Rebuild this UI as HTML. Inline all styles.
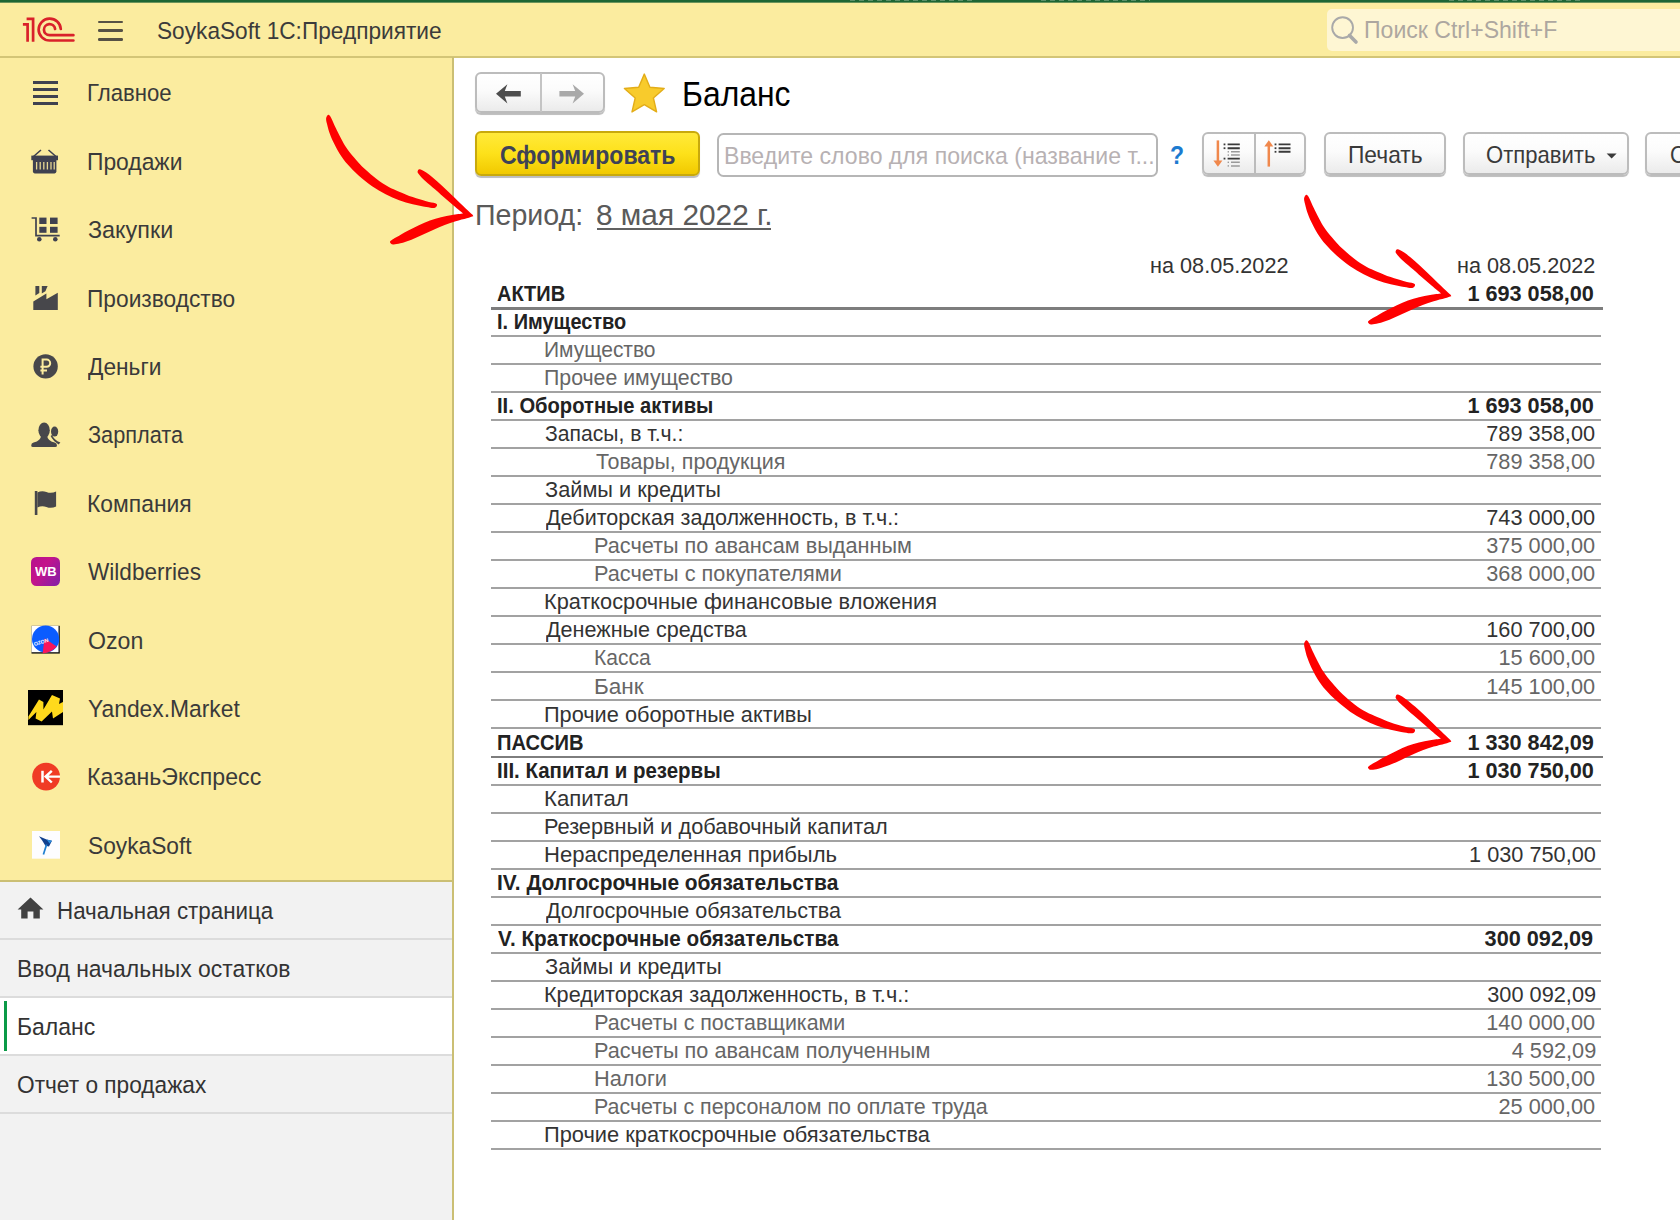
<!DOCTYPE html>
<html lang="ru"><head><meta charset="utf-8"><title>Баланс</title>
<style>
html,body{margin:0;padding:0}
body{width:1680px;height:1220px;overflow:hidden;position:relative;background:#fff;font-family:"Liberation Sans",sans-serif}
.abs,.t,svg{position:absolute}
.t{white-space:nowrap;line-height:1;transform-origin:0 50%}
.btn{position:absolute;box-sizing:border-box;border:2px solid #bcbcbc;border-radius:6px;background:linear-gradient(#ffffff 0%,#fbfbfb 45%,#ebebeb 100%);box-shadow:0 1.1px .7px rgba(0,0,0,.26)}
.ln{position:absolute;left:491px;width:1110px;height:2px;background:#a2a2a2}
.lk{position:absolute;left:491px;width:1111.6px;height:2.7px;background:#7d7d7d}
.sep{position:absolute;left:0;width:452px;height:2.3px;background:#dcdcdc}
</style></head><body>

<div class="abs" style="left:0;top:0;width:1680px;height:56px;background:#fbec9f"></div>
<div class="abs" style="left:0;top:0;width:1680px;height:3px;background:linear-gradient(#1d6634 0,#1d6634 2px,#b9c182 3px)"></div>
<div class="abs" style="left:0;top:55.6px;width:1680px;height:2.4px;background:#d3c577"></div>
<div class="abs" style="left:850px;top:0;width:125px;height:1.2px;background:repeating-linear-gradient(90deg,rgba(235,240,225,.3) 0 5px,rgba(235,240,225,0) 5px 9px)"></div>
<div class="abs" style="left:1041px;top:0;width:109px;height:1.2px;background:repeating-linear-gradient(90deg,rgba(235,240,225,.3) 0 5px,rgba(235,240,225,0) 5px 9px)"></div>
<div class="abs" style="left:1449px;top:0;width:131px;height:1.2px;background:repeating-linear-gradient(90deg,rgba(235,240,225,.3) 0 5px,rgba(235,240,225,0) 5px 9px)"></div>
<svg style="left:20px;top:14px" width="58" height="32" viewBox="20 14 58 32">
<g fill="none" stroke="#d9212a" stroke-width="2.7">
<path d="M27.6 41.7V24.4H22.9"/>
<path d="M33.1 41.7V18.9H26.6"/>
<path d="M60.8 29A11.1 10.9 0 1 0 49.7 40.5H73.4" stroke-linecap="round"/>
<path d="M55.1 29A5.6 5.5 0 1 0 49.5 35.2H73.4" stroke-linecap="round"/>
</g></svg>
<div class="abs" style="left:98.2px;top:20.55px;width:24.6px;height:2.5px;border-radius:1.2px;background:#565145"></div>
<div class="abs" style="left:98.2px;top:29.45px;width:24.6px;height:2.5px;border-radius:1.2px;background:#565145"></div>
<div class="abs" style="left:98.2px;top:38.15px;width:24.6px;height:2.5px;border-radius:1.2px;background:#565145"></div>
<span class="t" style="top:19.03px;font-size:24.3px;color:#3b3b3b;left:157.37px;transform:scaleX(0.9330);">SoykaSoft 1С:Предприятие</span>
<div class="abs" style="left:1327px;top:9px;width:400px;height:42px;border-radius:5px;background:#fef6d3"></div>
<svg style="left:1328px;top:14px" width="32" height="32" viewBox="1328 14 32 32"><circle cx="1342.6" cy="27.6" r="10.4" fill="none" stroke="#a9a9a9" stroke-width="1.9"/><path d="M1349.6 35.4L1356 42" stroke="#a9a9a9" stroke-width="3.6" stroke-linecap="round"/></svg>
<span class="t" style="top:18.45px;font-size:23.8px;color:#ada7a0;left:1363.96px;transform:scaleX(0.9690);">Поиск Ctrl+Shift+F</span>
<div class="abs" style="left:0;top:57.8px;width:452px;height:822px;background:#fbec9f"></div>
<div class="abs" style="left:0;top:879.6px;width:452px;height:2.2px;background:#cbbf74"></div>
<div class="abs" style="left:0;top:881.8px;width:452px;height:340px;background:#f2f2f2"></div>
<div class="abs" style="left:452px;top:57px;width:2.4px;height:1165px;background:#cbbf74"></div>
<span class="t" style="top:81.36px;font-size:24.5px;color:#3a3a3a;left:87.19px;transform:scaleX(0.9044);">Главное</span>
<span class="t" style="top:149.76px;font-size:24.5px;color:#3a3a3a;left:87.14px;transform:scaleX(0.9323);">Продажи</span>
<span class="t" style="top:218.16px;font-size:24.5px;color:#3a3a3a;left:87.75px;transform:scaleX(0.9540);">Закупки</span>
<span class="t" style="top:286.56px;font-size:24.5px;color:#3a3a3a;left:87.14px;transform:scaleX(0.9280);">Производство</span>
<span class="t" style="top:354.96px;font-size:24.5px;color:#3a3a3a;left:88.40px;transform:scaleX(0.9269);">Деньги</span>
<span class="t" style="top:423.36px;font-size:24.5px;color:#3a3a3a;left:87.81px;transform:scaleX(0.8869);">Зарплата</span>
<span class="t" style="top:491.76px;font-size:24.5px;color:#3a3a3a;left:87.13px;transform:scaleX(0.9339);">Компания</span>
<span class="t" style="top:560.16px;font-size:24.5px;color:#3a3a3a;left:88.40px;transform:scaleX(0.9221);">Wildberries</span>
<span class="t" style="top:628.56px;font-size:24.5px;color:#3a3a3a;left:87.76px;transform:scaleX(0.9446);">Ozon</span>
<span class="t" style="top:696.96px;font-size:24.5px;color:#3a3a3a;left:87.77px;transform:scaleX(0.9315);">Yandex.Market</span>
<span class="t" style="top:765.36px;font-size:24.5px;color:#3a3a3a;left:87.11px;transform:scaleX(0.9434);">КазаньЭкспресс</span>
<span class="t" style="top:833.76px;font-size:24.5px;color:#3a3a3a;left:87.77px;transform:scaleX(0.9279);">SoykaSoft</span>
<div class="abs" style="left:33px;top:81px;width:25px;height:3px;background:#3f4150"></div>
<div class="abs" style="left:33px;top:88px;width:25px;height:3px;background:#3f4150"></div>
<div class="abs" style="left:33px;top:95px;width:25px;height:3px;background:#3f4150"></div>
<div class="abs" style="left:33px;top:102px;width:25px;height:3px;background:#3f4150"></div>
<svg style="left:29px;top:146px" width="32" height="30" viewBox="29 146 32 30">
<path d="M33.5 156.5L41 150M56 156.5L48.5 150" stroke="#3f4150" stroke-width="1.6" fill="none"/>
<rect x="31.3" y="155.6" width="26.7" height="4.6" fill="#3f4150"/>
<path d="M32.9 160H56.4V171.6Q56.4 173.4 54.6 173.4H34.7Q32.9 173.4 32.9 171.6Z" fill="#3f4150"/>
<g stroke="#e6d692" stroke-width="1.3"><path d="M36.6 162V169.6M40.2 162V169.6M43.8 162V169.6M47.4 162V169.6M51 162V169.6M54.2 162V169.6"/></g>
</svg>
<svg style="left:29px;top:214px" width="34" height="30" viewBox="29 214 34 30">
<path d="M31.6 218H36V235.6H59.7" stroke="#3f4150" stroke-width="1.7" fill="none"/>
<rect x="39.3" y="217.6" width="7.2" height="6.4" fill="#3f4150"/><rect x="50" y="217.6" width="7.6" height="6.4" fill="#3f4150"/>
<rect x="39.3" y="226.8" width="7.2" height="6" fill="#3f4150"/><rect x="50" y="226.8" width="7.6" height="6" fill="#3f4150"/>
<circle cx="39.3" cy="239.3" r="2.3" fill="#3f4150"/><circle cx="55.3" cy="239.3" r="2.3" fill="#3f4150"/>
</svg>
<svg style="left:30px;top:283px" width="32" height="30" viewBox="30 283 32 30">
<path d="M33.3 310V301.4L46.4 293.6V299.3L57.8 292.8V310Z" fill="#47474b"/>
<path d="M35.4 286H39.3V293L35.4 295.6Z" fill="#47474b"/><path d="M41.8 286H47.6L45.4 291.2L41.8 293.6Z" fill="#47474b"/>
</svg>
<svg style="left:32px;top:353px" width="28" height="28" viewBox="32 353 28 28">
<circle cx="45.6" cy="366.4" r="12.2" fill="#47474b"/>
<path d="M42.6 374.4V359.6H46.6A3.5 3.5 0 0 1 46.6 366.8H40.4M40.4 370.4H47" stroke="#fbec9f" stroke-width="2" fill="none"/>
</svg>
<svg style="left:29px;top:420px" width="34" height="30" viewBox="29 420 34 30">
<ellipse cx="54.6" cy="431.6" rx="3.6" ry="5" fill="#47474b"/>
<path d="M52 435Q54 440 60.4 442.6L58.6 444.4Q53 441 50.6 436Z" fill="#47474b"/>
<ellipse cx="44.1" cy="430.2" rx="5.7" ry="7.8" fill="#47474b"/>
<path d="M41 435.5Q41 440.6 33.6 442.6Q31.2 443.4 31.2 445.4Q31.2 447 33 447H55.2Q57 447 57 445.4Q57 443.4 54.6 442.6Q47.2 440.6 47.2 435.5Z" fill="#47474b"/>
</svg>
<svg style="left:32px;top:488px" width="28" height="30" viewBox="32 488 28 30">
<rect x="34.8" y="491" width="2.6" height="24" fill="#47474b"/>
<path d="M37.4 492.4Q42 490.2 46.4 492Q51.4 494 56.1 491.4V506.4Q51.4 509 46.4 507Q42 505.2 37.4 507.4Z" fill="#47474b"/>
</svg>
<div class="abs" style="left:31.2px;top:557.2px;width:29px;height:28.5px;border-radius:5.5px;background:linear-gradient(125deg,#b4128f 0%,#c4148a 40%,#a01a9c 70%,#8220a8 100%)"></div>
<span class="t" style="top:565.03px;font-size:13.2px;color:#fff;font-weight:700;left:34.90px;transform:scaleX(0.9818);">WB</span>
<svg style="left:30px;top:624px" width="32" height="32" viewBox="30 624 32 32">
<rect x="31.5" y="625.8" width="28.3" height="27.8" fill="#111"/>
<rect x="31.5" y="625.8" width="27" height="26.4" fill="#fff"/>
<circle cx="45.6" cy="639" r="13.6" fill="#0a5cff"/>
<path d="M44.6 638.2L56.6 646.4Q51.4 652.8 42.6 653.4Z" fill="#f9155a"/>
<text x="34.4" y="646" font-family="Liberation Sans,sans-serif" font-size="5.2" font-weight="700" fill="#fff" transform="rotate(-17 34.4 646)">OZON</text>
</svg>
<svg style="left:28px;top:690.4px" width="35.2" height="35.2" viewBox="0 0 35.2 35.2">
<rect width="35.2" height="35.2" fill="#000"/>
<path d="M0.4 26.6L11 9.6L15.4 12V19.4L24 5L32 8.6L31 14L35.2 12V22L25 28.6L24 21.4L13.6 31.6L7.6 28.4L8.4 22L0.4 30Z" fill="#ffd91c"/>
</svg>
<svg style="left:31px;top:761px" width="31" height="31" viewBox="31 761 31 31">
<circle cx="46.1" cy="776.6" r="13.9" fill="#f03b25"/>
<path d="M42.5 770.8V782.5" stroke="#fff" stroke-width="2.5" fill="none"/>
<path d="M51.8 770.8L45.6 776.6L51.8 782.5M45.6 776.6H60" stroke="#fff" stroke-width="2.4" fill="none"/>
</svg>
<svg style="left:31.5px;top:831px" width="28.1" height="27.7" viewBox="0 0 28.1 27.7">
<rect width="28.1" height="27.7" fill="#fdfdff"/>
<path d="M7 5.2L14.6 8.6L20 9.8L17 15.4L13.4 14.8L10.2 9.6Z" fill="#10408f"/>
<path d="M14.6 13.4L11.4 23.6" stroke="#1e7fd0" stroke-width="1.7" fill="none"/>
<path d="M14.6 8.6L20 9.8L17.6 12.4Z" fill="#2a8fe0"/>
</svg>
<div class="abs" style="left:0;top:998px;width:452px;height:55.6px;background:#fff"></div>
<div class="sep" style="top:937.5px"></div>
<div class="sep" style="top:995.5px"></div>
<div class="sep" style="top:1053.5px"></div>
<div class="sep" style="top:1111.5px"></div>
<div class="abs" style="left:3.6px;top:1000.6px;width:3.6px;height:50px;background:#0b9a47"></div>
<svg style="left:17px;top:897px" width="28" height="24" viewBox="17 897 28 24"><path d="M30.5 897.5L17.6 909.4H21.2V918.5H27.6V911.6H33.4V918.5H39.8V909.4H43.4Z" fill="#424242"/></svg>
<span class="t" style="top:898.73px;font-size:24.3px;color:#333;left:57.06px;transform:scaleX(0.9197);">Начальная страница</span>
<span class="t" style="top:956.73px;font-size:24.3px;color:#333;left:16.51px;transform:scaleX(0.9436);">Ввод начальных остатков</span>
<span class="t" style="top:1014.73px;font-size:24.3px;color:#333;left:16.51px;transform:scaleX(0.9462);">Баланс</span>
<span class="t" style="top:1072.73px;font-size:24.3px;color:#333;left:17.17px;transform:scaleX(0.9332);">Отчет о продажах</span>
<div class="btn" style="left:475.4px;top:71.8px;width:129.2px;height:40.8px"></div>
<div class="abs" style="left:540.2px;top:72.8px;width:1.9px;height:39px;background:#c4c4c4"></div>
<svg style="left:490px;top:80px" width="100" height="28" viewBox="490 80 100 28">
<path d="M496 93.7L507.4 84.2L504.8 91H520.8V96.6H504.8L507.4 103.4Z" fill="#4d4d4d"/>
<path d="M584 93.7L572.6 84.2L575.2 91H559.4V96.6H575.2L572.6 103.4Z" fill="#a9a9a9"/>
</svg>
<svg style="left:620px;top:70px" width="50" height="48" viewBox="620 70 50 48"><polygon points="644.3,74.1 649.9,87.2 664.2,88.5 653.4,98.0 656.6,111.9 644.3,104.6 632.0,111.9 635.2,98.0 624.4,88.5 638.7,87.2" fill="#f8cb2c" stroke="#e3ad18" stroke-width="1.4" stroke-linejoin="round"/></svg>
<span class="t" style="top:76.12px;font-size:35.3px;color:#000;left:681.89px;transform:scaleX(0.9026);">Баланс</span>
<div class="btn" style="left:475.4px;top:131.4px;width:224.2px;height:44.4px;border-color:#c8a90c;background:linear-gradient(#ffe93a 0%,#fde11a 50%,#f1c900 100%)"></div>
<span class="t" style="top:142.97px;font-size:25.2px;color:#3e4256;font-weight:700;left:499.89px;transform:scaleX(0.9147);">Сформировать</span>
<div class="abs" style="left:717.1px;top:132.9px;width:441.4px;height:44.2px;box-sizing:border-box;border:2px solid #b6b6b6;border-radius:6.5px;background:#fff"></div>
<span class="t" style="top:143.65px;font-size:23.8px;color:#b7b1b3;left:723.66px;transform:scaleX(0.9691);">Введите слово для поиска (название т...</span>
<span class="t" style="top:142.81px;font-size:25.5px;color:#1c7bd0;font-weight:700;left:1170.00px;transform:scaleX(0.9000);">?</span>
<div class="btn" style="left:1201.6px;top:131.5px;width:104.4px;height:43.8px"></div>
<div class="abs" style="left:1253.7px;top:132.5px;width:1.9px;height:42px;background:#bcbcbc"></div>
<svg style="left:1208px;top:136px" width="92" height="36" viewBox="1208 136 92 36">
<path d="M1217.9 140.4V162" stroke="#f0884c" stroke-width="2.5"/><path d="M1213.4 160.6H1222.4L1217.9 166.8Z" fill="#f0884c"/>
<path d="M1268.8 166.6V145" stroke="#f0884c" stroke-width="2.5"/><path d="M1264.3 146.4H1273.3L1268.8 140.2Z" fill="#f0884c"/>
<g stroke="#3a3a3a" stroke-width="1.9"><path d="M1227.6 144.4H1239.8M1227.6 148.2H1239.8M1227.6 158.6H1239.8"/><path d="M1278.6 144.4H1290.5M1278.6 148.2H1290.5M1278.6 151.8H1290.5"/></g>
<g fill="#3a3a3a"><rect x="1223.6" y="143.5" width="1.8" height="1.8"/><rect x="1223.6" y="147.3" width="1.8" height="1.8"/><rect x="1223.6" y="157.7" width="1.8" height="1.8"/>
<rect x="1274.6" y="143.5" width="1.8" height="1.8"/><rect x="1274.6" y="147.3" width="1.8" height="1.8"/><rect x="1274.6" y="150.9" width="1.8" height="1.8"/></g>
<g stroke="#9a9a9a" stroke-width="1.5"><path d="M1231 151.8H1239.8M1231 155.1H1239.8M1231 162.3H1239.8M1231 165.9H1239.8"/></g>
<g fill="#9a9a9a"><rect x="1227.6" y="151.1" width="1.4" height="1.4"/><rect x="1227.6" y="154.4" width="1.4" height="1.4"/><rect x="1227.6" y="161.6" width="1.4" height="1.4"/><rect x="1227.6" y="165.2" width="1.4" height="1.4"/></g>
</svg>
<div class="btn" style="left:1324.2px;top:131.5px;width:122.2px;height:43.8px"></div>
<span class="t" style="top:143.76px;font-size:23.2px;color:#3a3a3a;left:1347.64px;transform:scaleX(0.9822);">Печать</span>
<div class="btn" style="left:1462.7px;top:131.5px;width:166.4px;height:43.8px"></div>
<span class="t" style="top:143.76px;font-size:23.2px;color:#3a3a3a;left:1486.35px;transform:scaleX(0.9513);">Отправить</span>
<svg style="left:1604px;top:150px" width="16" height="10" viewBox="1604 150 16 10"><path d="M1606.6 153.6H1616.6L1611.6 158.6Z" fill="#3a3a3a"/></svg>
<div class="btn" style="left:1645.3px;top:131.5px;width:120px;height:43.8px"></div>
<span class="t" style="top:143.76px;font-size:23.2px;color:#3a3a3a;left:1670.00px;transform:scaleX(0.9300);">С</span>
<span class="t" style="top:199.61px;font-size:29.4px;color:#5a5a5a;left:475.35px;transform:scaleX(0.9729);">Период:</span>
<span class="t" style="top:199.61px;font-size:29.4px;color:#5a5a5a;left:596.49px;transform:scaleX(1.0147);">8 мая 2022 г.</span>
<div class="abs" style="left:596.6px;top:228px;width:174px;height:2px;background:#616161"></div>
<span class="t" style="top:255.70px;font-size:21.5px;color:#333;left:1150.29px;transform:scaleX(1.0081);">на 08.05.2022</span>
<span class="t" style="top:255.70px;font-size:21.5px;color:#333;left:1457.29px;transform:scaleX(1.0066);">на 08.05.2022</span>
<span class="t" style="top:284.12px;font-size:21.3px;color:#222;font-weight:700;left:497.36px;transform:scaleX(0.9380);">АКТИВ</span>
<span class="t" style="top:284.03px;font-size:21.4px;color:#222;font-weight:700;right:85.68px;transform-origin:100% 50%;transform:scaleX(1.0130);">1 693 058,00</span>
<div class="lk" style="top:306.95px"></div>
<span class="t" style="top:312.15px;font-size:21.3px;color:#222;font-weight:700;left:497.36px;transform:scaleX(0.9368);">I. Имущество</span>
<div class="ln" style="top:334.94px"></div>
<span class="t" style="top:340.10px;font-size:21.4px;color:#666;left:544.34px;transform:scaleX(0.9802);">Имущество</span>
<div class="ln" style="top:362.97px"></div>
<span class="t" style="top:368.14px;font-size:21.4px;color:#666;left:544.31px;transform:scaleX(0.9947);">Прочее имущество</span>
<div class="ln" style="top:391.01px"></div>
<span class="t" style="top:396.26px;font-size:21.3px;color:#222;font-weight:700;left:497.35px;transform:scaleX(0.9469);">II. Оборотные активы</span>
<span class="t" style="top:396.17px;font-size:21.4px;color:#222;font-weight:700;right:85.68px;transform-origin:100% 50%;transform:scaleX(1.0130);">1 693 058,00</span>
<div class="ln" style="top:419.04px"></div>
<span class="t" style="top:424.21px;font-size:21.4px;color:#333;left:545.01px;transform:scaleX(0.9883);">Запасы, в т.ч.:</span>
<span class="t" style="top:424.21px;font-size:21.4px;color:#333;right:85.04px;transform-origin:100% 50%;transform:scaleX(1.0160);">789 358,00</span>
<div class="ln" style="top:447.08px"></div>
<span class="t" style="top:452.24px;font-size:21.4px;color:#666;left:595.70px;transform:scaleX(1.0037);">Товары, продукция</span>
<span class="t" style="top:452.24px;font-size:21.4px;color:#666;right:85.04px;transform-origin:100% 50%;transform:scaleX(1.0160);">789 358,00</span>
<div class="ln" style="top:475.11px"></div>
<span class="t" style="top:480.28px;font-size:21.4px;color:#333;left:544.98px;transform:scaleX(1.0175);">Займы и кредиты</span>
<div class="ln" style="top:503.15px"></div>
<span class="t" style="top:508.31px;font-size:21.4px;color:#333;left:545.70px;transform:scaleX(1.0069);">Дебиторская задолженность, в т.ч.:</span>
<span class="t" style="top:508.31px;font-size:21.4px;color:#333;right:85.04px;transform-origin:100% 50%;transform:scaleX(1.0160);">743 000,00</span>
<div class="ln" style="top:531.18px"></div>
<span class="t" style="top:536.35px;font-size:21.4px;color:#666;left:594.27px;transform:scaleX(1.0139);">Расчеты по авансам выданным</span>
<span class="t" style="top:536.35px;font-size:21.4px;color:#666;right:85.04px;transform-origin:100% 50%;transform:scaleX(1.0160);">375 000,00</span>
<div class="ln" style="top:559.22px"></div>
<span class="t" style="top:564.38px;font-size:21.4px;color:#666;left:594.27px;transform:scaleX(1.0149);">Расчеты с покупателями</span>
<span class="t" style="top:564.38px;font-size:21.4px;color:#666;right:85.04px;transform-origin:100% 50%;transform:scaleX(1.0160);">368 000,00</span>
<div class="ln" style="top:587.25px"></div>
<span class="t" style="top:592.42px;font-size:21.4px;color:#333;left:544.27px;transform:scaleX(1.0167);">Краткосрочные финансовые вложения</span>
<div class="ln" style="top:615.28px"></div>
<span class="t" style="top:620.45px;font-size:21.4px;color:#333;left:545.70px;transform:scaleX(1.0080);">Денежные средства</span>
<span class="t" style="top:620.45px;font-size:21.4px;color:#333;right:85.04px;transform-origin:100% 50%;transform:scaleX(1.0160);">160 700,00</span>
<div class="ln" style="top:643.32px"></div>
<span class="t" style="top:648.49px;font-size:21.4px;color:#666;left:594.33px;transform:scaleX(0.9839);">Касса</span>
<span class="t" style="top:648.49px;font-size:21.4px;color:#666;right:84.93px;transform-origin:100% 50%;transform:scaleX(1.0160);">15 600,00</span>
<div class="ln" style="top:671.36px"></div>
<span class="t" style="top:676.52px;font-size:21.4px;color:#666;left:594.19px;transform:scaleX(1.0533);">Банк</span>
<span class="t" style="top:676.52px;font-size:21.4px;color:#666;right:85.04px;transform-origin:100% 50%;transform:scaleX(1.0160);">145 100,00</span>
<div class="ln" style="top:699.39px"></div>
<span class="t" style="top:704.56px;font-size:21.4px;color:#333;left:544.27px;transform:scaleX(1.0157);">Прочие оборотные активы</span>
<div class="ln" style="top:727.43px"></div>
<span class="t" style="top:732.68px;font-size:21.3px;color:#222;font-weight:700;left:497.35px;transform:scaleX(0.9456);">ПАССИВ</span>
<span class="t" style="top:732.59px;font-size:21.4px;color:#222;font-weight:700;right:85.68px;transform-origin:100% 50%;transform:scaleX(1.0130);">1 330 842,09</span>
<div class="lk" style="top:755.51px"></div>
<span class="t" style="top:760.71px;font-size:21.3px;color:#222;font-weight:700;left:497.34px;transform:scaleX(0.9613);">III. Капитал и резервы</span>
<span class="t" style="top:760.63px;font-size:21.4px;color:#222;font-weight:700;right:85.68px;transform-origin:100% 50%;transform:scaleX(1.0130);">1 030 750,00</span>
<div class="ln" style="top:783.50px"></div>
<span class="t" style="top:788.66px;font-size:21.4px;color:#333;left:544.23px;transform:scaleX(1.0359);">Капитал</span>
<div class="ln" style="top:811.53px"></div>
<span class="t" style="top:816.70px;font-size:21.4px;color:#333;left:544.27px;transform:scaleX(1.0158);">Резервный и добавочный капитал</span>
<div class="ln" style="top:839.56px"></div>
<span class="t" style="top:844.73px;font-size:21.4px;color:#333;left:544.24px;transform:scaleX(1.0298);">Нераспределенная прибыль</span>
<span class="t" style="top:844.73px;font-size:21.4px;color:#333;right:84.18px;transform-origin:100% 50%;transform:scaleX(1.0160);">1 030 750,00</span>
<div class="ln" style="top:867.60px"></div>
<span class="t" style="top:872.85px;font-size:21.3px;color:#222;font-weight:700;left:497.32px;transform:scaleX(0.9821);">IV. Долгосрочные обязательства</span>
<div class="ln" style="top:895.64px"></div>
<span class="t" style="top:900.80px;font-size:21.4px;color:#333;left:545.70px;transform:scaleX(1.0089);">Долгосрочные обязательства</span>
<div class="ln" style="top:923.67px"></div>
<span class="t" style="top:928.92px;font-size:21.3px;color:#222;font-weight:700;left:498.00px;transform:scaleX(0.9718);">V. Краткосрочные обязательства</span>
<span class="t" style="top:928.84px;font-size:21.4px;color:#222;font-weight:700;right:86.54px;transform-origin:100% 50%;transform:scaleX(1.0130);">300 092,09</span>
<div class="ln" style="top:951.71px"></div>
<span class="t" style="top:956.87px;font-size:21.4px;color:#333;left:544.98px;transform:scaleX(1.0211);">Займы и кредиты</span>
<div class="ln" style="top:979.74px"></div>
<span class="t" style="top:984.91px;font-size:21.4px;color:#333;left:544.27px;transform:scaleX(1.0129);">Кредиторская задолженность, в т.ч.:</span>
<span class="t" style="top:984.91px;font-size:21.4px;color:#333;right:84.02px;transform-origin:100% 50%;transform:scaleX(1.0160);">300 092,09</span>
<div class="ln" style="top:1007.77px"></div>
<span class="t" style="top:1012.94px;font-size:21.4px;color:#666;left:594.30px;">Расчеты с поставщиками</span>
<span class="t" style="top:1012.94px;font-size:21.4px;color:#666;right:85.04px;transform-origin:100% 50%;transform:scaleX(1.0160);">140 000,00</span>
<div class="ln" style="top:1035.81px"></div>
<span class="t" style="top:1040.98px;font-size:21.4px;color:#666;left:594.27px;transform:scaleX(1.0140);">Расчеты по авансам полученным</span>
<span class="t" style="top:1040.98px;font-size:21.4px;color:#666;right:83.81px;transform-origin:100% 50%;transform:scaleX(1.0160);">4 592,09</span>
<div class="ln" style="top:1063.85px"></div>
<span class="t" style="top:1069.01px;font-size:21.4px;color:#666;left:594.26px;transform:scaleX(1.0176);">Налоги</span>
<span class="t" style="top:1069.01px;font-size:21.4px;color:#666;right:85.04px;transform-origin:100% 50%;transform:scaleX(1.0160);">130 500,00</span>
<div class="ln" style="top:1091.88px"></div>
<span class="t" style="top:1097.05px;font-size:21.4px;color:#666;left:594.30px;transform:scaleX(1.0010);">Расчеты с персоналом по оплате труда</span>
<span class="t" style="top:1097.05px;font-size:21.4px;color:#666;right:84.93px;transform-origin:100% 50%;transform:scaleX(1.0160);">25 000,00</span>
<div class="ln" style="top:1119.91px"></div>
<span class="t" style="top:1125.08px;font-size:21.4px;color:#333;left:544.26px;transform:scaleX(1.0207);">Прочие краткосрочные обязательства</span>
<div class="ln" style="top:1147.95px"></div>
<svg style="left:0;top:0" width="1680" height="1220" viewBox="0 0 1680 1220"><g transform="translate(312 100) scale(0.13120)"><g fill="#fe0000"><path d="M124.8 112.5C118.5 113.1 109.3 126.7 107.6 138.5C105.9 150.3 110.5 165.4 114.5 183.2C118.5 200.9 123.6 222.1 131.6 245.0C139.6 267.9 149.4 293.2 162.6 320.7C175.8 348.2 192.4 381.4 210.7 410.0C229.0 438.6 248.4 465.0 272.5 492.5C296.6 520.0 324.1 547.5 355.0 575.0C385.9 602.5 423.7 633.4 458.1 657.4C492.5 681.4 526.8 701.5 561.2 719.3C595.6 737.1 629.9 751.4 664.3 764.0C698.7 776.6 733.0 786.3 767.4 794.9C801.8 803.5 843.0 810.9 870.5 815.5C898.0 820.1 918.5 824.5 932.3 822.4C946.0 820.3 951.9 809.0 953.0 803.0C954.1 797.0 953.0 792.0 939.2 786.6C925.5 781.2 899.1 778.6 870.5 770.8C841.9 763.0 801.8 751.9 767.4 739.9C733.0 727.9 695.2 711.9 664.3 698.7C633.4 685.5 610.4 677.0 581.8 660.9C553.2 644.8 522.3 624.8 492.5 602.4C462.7 580.0 431.8 554.3 403.1 526.8C374.5 499.3 345.8 467.3 320.6 437.5C295.4 407.7 274.8 384.8 251.9 348.1C229.0 311.5 200.9 253.1 183.2 217.6C165.4 182.1 155.1 152.6 145.4 135.1C135.7 117.6 131.1 111.9 124.8 112.5Z"/><path d="M1229.0 886.0C1220.8 888.6 1202.1 895.1 1179.9 901.4C1157.7 907.7 1123.7 915.4 1095.6 923.8C1067.5 932.2 1039.4 941.1 1011.3 951.9C983.2 962.7 955.1 975.9 927.0 988.5C898.9 1001.1 870.8 1015.1 842.7 1027.8C814.6 1040.5 786.4 1053.6 758.3 1064.4C730.2 1075.2 697.4 1086.4 674.0 1092.5C650.6 1098.6 630.9 1102.0 617.8 1100.9C604.7 1099.8 597.8 1091.0 595.3 1086.0C592.8 1081.0 594.6 1077.9 603.0 1071.0C611.4 1064.1 624.7 1057.0 645.9 1044.7C667.1 1032.4 702.1 1011.9 730.2 996.9C758.3 981.9 786.5 967.9 814.6 954.8C842.7 941.7 870.8 928.5 898.9 918.2C927.0 907.9 955.1 899.9 983.2 892.9C1011.3 885.9 1039.4 880.8 1067.5 876.1C1095.6 871.4 1137.8 866.7 1151.8 864.8C1137.8 853.1 1095.6 818.5 1067.5 794.6C1039.4 770.7 1011.3 745.9 983.2 721.5C955.1 697.1 922.3 669.0 898.9 648.4C875.5 627.8 857.7 612.8 842.7 597.8C827.7 582.8 815.0 567.9 808.9 558.5C802.8 549.1 804.2 546.8 806.1 541.6C808.0 536.5 809.4 525.7 820.2 527.6C831.0 529.5 848.3 537.5 870.8 552.9C893.3 568.3 927.0 595.9 955.1 620.3C983.2 644.6 1011.3 672.3 1039.4 699.0C1067.5 725.7 1100.3 758.0 1123.7 780.5C1147.1 803.0 1163.5 818.4 1179.9 833.9C1196.3 849.4 1213.9 864.6 1222.1 873.3C1230.3 882.0 1227.8 883.9 1229.0 886.0Z"/></g></g></svg>
<svg style="left:0;top:0" width="1680" height="1220" viewBox="0 0 1680 1220"><g transform="translate(1290 180) scale(0.13120)"><g fill="#fe0000"><path d="M124.8 112.5C118.5 113.1 109.3 126.7 107.6 138.5C105.9 150.3 110.5 165.4 114.5 183.2C118.5 200.9 123.6 222.1 131.6 245.0C139.6 267.9 149.4 293.2 162.6 320.7C175.8 348.2 192.4 381.4 210.7 410.0C229.0 438.6 248.4 465.0 272.5 492.5C296.6 520.0 324.1 547.5 355.0 575.0C385.9 602.5 423.7 633.4 458.1 657.4C492.5 681.4 526.8 701.5 561.2 719.3C595.6 737.1 629.9 751.4 664.3 764.0C698.7 776.6 733.0 786.3 767.4 794.9C801.8 803.5 843.0 810.9 870.5 815.5C898.0 820.1 918.5 824.5 932.3 822.4C946.0 820.3 951.9 809.0 953.0 803.0C954.1 797.0 953.0 792.0 939.2 786.6C925.5 781.2 899.1 778.6 870.5 770.8C841.9 763.0 801.8 751.9 767.4 739.9C733.0 727.9 695.2 711.9 664.3 698.7C633.4 685.5 610.4 677.0 581.8 660.9C553.2 644.8 522.3 624.8 492.5 602.4C462.7 580.0 431.8 554.3 403.1 526.8C374.5 499.3 345.8 467.3 320.6 437.5C295.4 407.7 274.8 384.8 251.9 348.1C229.0 311.5 200.9 253.1 183.2 217.6C165.4 182.1 155.1 152.6 145.4 135.1C135.7 117.6 131.1 111.9 124.8 112.5Z"/><path d="M1229.0 886.0C1220.8 888.6 1202.1 895.1 1179.9 901.4C1157.7 907.7 1123.7 915.4 1095.6 923.8C1067.5 932.2 1039.4 941.1 1011.3 951.9C983.2 962.7 955.1 975.9 927.0 988.5C898.9 1001.1 870.8 1015.1 842.7 1027.8C814.6 1040.5 786.4 1053.6 758.3 1064.4C730.2 1075.2 697.4 1086.4 674.0 1092.5C650.6 1098.6 630.9 1102.0 617.8 1100.9C604.7 1099.8 597.8 1091.0 595.3 1086.0C592.8 1081.0 594.6 1077.9 603.0 1071.0C611.4 1064.1 624.7 1057.0 645.9 1044.7C667.1 1032.4 702.1 1011.9 730.2 996.9C758.3 981.9 786.5 967.9 814.6 954.8C842.7 941.7 870.8 928.5 898.9 918.2C927.0 907.9 955.1 899.9 983.2 892.9C1011.3 885.9 1039.4 880.8 1067.5 876.1C1095.6 871.4 1137.8 866.7 1151.8 864.8C1137.8 853.1 1095.6 818.5 1067.5 794.6C1039.4 770.7 1011.3 745.9 983.2 721.5C955.1 697.1 922.3 669.0 898.9 648.4C875.5 627.8 857.7 612.8 842.7 597.8C827.7 582.8 815.0 567.9 808.9 558.5C802.8 549.1 804.2 546.8 806.1 541.6C808.0 536.5 809.4 525.7 820.2 527.6C831.0 529.5 848.3 537.5 870.8 552.9C893.3 568.3 927.0 595.9 955.1 620.3C983.2 644.6 1011.3 672.3 1039.4 699.0C1067.5 725.7 1100.3 758.0 1123.7 780.5C1147.1 803.0 1163.5 818.4 1179.9 833.9C1196.3 849.4 1213.9 864.6 1222.1 873.3C1230.3 882.0 1227.8 883.9 1229.0 886.0Z"/></g></g></svg>
<svg style="left:0;top:0" width="1680" height="1220" viewBox="0 0 1680 1220"><g transform="translate(1290 625.4) scale(0.13120)"><g fill="#fe0000"><path d="M124.8 112.5C118.5 113.1 109.3 126.7 107.6 138.5C105.9 150.3 110.5 165.4 114.5 183.2C118.5 200.9 123.6 222.1 131.6 245.0C139.6 267.9 149.4 293.2 162.6 320.7C175.8 348.2 192.4 381.4 210.7 410.0C229.0 438.6 248.4 465.0 272.5 492.5C296.6 520.0 324.1 547.5 355.0 575.0C385.9 602.5 423.7 633.4 458.1 657.4C492.5 681.4 526.8 701.5 561.2 719.3C595.6 737.1 629.9 751.4 664.3 764.0C698.7 776.6 733.0 786.3 767.4 794.9C801.8 803.5 843.0 810.9 870.5 815.5C898.0 820.1 918.5 824.5 932.3 822.4C946.0 820.3 951.9 809.0 953.0 803.0C954.1 797.0 953.0 792.0 939.2 786.6C925.5 781.2 899.1 778.6 870.5 770.8C841.9 763.0 801.8 751.9 767.4 739.9C733.0 727.9 695.2 711.9 664.3 698.7C633.4 685.5 610.4 677.0 581.8 660.9C553.2 644.8 522.3 624.8 492.5 602.4C462.7 580.0 431.8 554.3 403.1 526.8C374.5 499.3 345.8 467.3 320.6 437.5C295.4 407.7 274.8 384.8 251.9 348.1C229.0 311.5 200.9 253.1 183.2 217.6C165.4 182.1 155.1 152.6 145.4 135.1C135.7 117.6 131.1 111.9 124.8 112.5Z"/><path d="M1229.0 886.0C1220.8 888.6 1202.1 895.1 1179.9 901.4C1157.7 907.7 1123.7 915.4 1095.6 923.8C1067.5 932.2 1039.4 941.1 1011.3 951.9C983.2 962.7 955.1 975.9 927.0 988.5C898.9 1001.1 870.8 1015.1 842.7 1027.8C814.6 1040.5 786.4 1053.6 758.3 1064.4C730.2 1075.2 697.4 1086.4 674.0 1092.5C650.6 1098.6 630.9 1102.0 617.8 1100.9C604.7 1099.8 597.8 1091.0 595.3 1086.0C592.8 1081.0 594.6 1077.9 603.0 1071.0C611.4 1064.1 624.7 1057.0 645.9 1044.7C667.1 1032.4 702.1 1011.9 730.2 996.9C758.3 981.9 786.5 967.9 814.6 954.8C842.7 941.7 870.8 928.5 898.9 918.2C927.0 907.9 955.1 899.9 983.2 892.9C1011.3 885.9 1039.4 880.8 1067.5 876.1C1095.6 871.4 1137.8 866.7 1151.8 864.8C1137.8 853.1 1095.6 818.5 1067.5 794.6C1039.4 770.7 1011.3 745.9 983.2 721.5C955.1 697.1 922.3 669.0 898.9 648.4C875.5 627.8 857.7 612.8 842.7 597.8C827.7 582.8 815.0 567.9 808.9 558.5C802.8 549.1 804.2 546.8 806.1 541.6C808.0 536.5 809.4 525.7 820.2 527.6C831.0 529.5 848.3 537.5 870.8 552.9C893.3 568.3 927.0 595.9 955.1 620.3C983.2 644.6 1011.3 672.3 1039.4 699.0C1067.5 725.7 1100.3 758.0 1123.7 780.5C1147.1 803.0 1163.5 818.4 1179.9 833.9C1196.3 849.4 1213.9 864.6 1222.1 873.3C1230.3 882.0 1227.8 883.9 1229.0 886.0Z"/></g></g></svg>
</body></html>
